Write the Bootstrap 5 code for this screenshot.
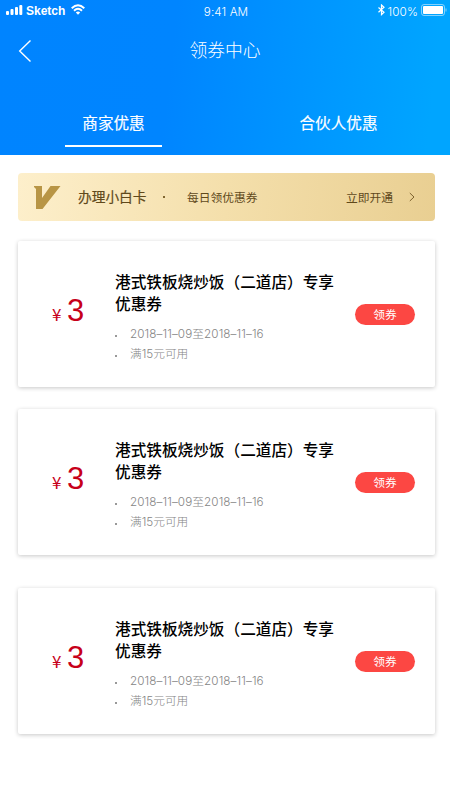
<!DOCTYPE html>
<html lang="zh-CN">
<head>
<meta charset="utf-8">
<meta name="viewport" content="width=device-width, initial-scale=1">
<title>领券中心</title>
<link href="https://cdn.jsdelivr.net/npm/bootstrap@5.3.0/dist/css/bootstrap.min.css" rel="stylesheet">
<style>
body{font-family:Inter,"Noto Sans CJK SC",sans-serif;height:800px;overflow:hidden;background:#fff}
svg{display:block;flex:none}
.hero{height:155px;background:linear-gradient(96deg,#0084ff 0%,#0085ff 38%,#00a5ff 95%)}
.status{height:24px;padding:0 5px 0 6px;font-size:12px;line-height:24px}
.status-side{width:150px}
.carrier{font:bold 12px/22px "Liberation Sans",sans-serif;margin-left:3px}
.wifi{margin-left:6px}
.battery{margin-right:-2px}
.clock{font-size:11.7px;padding-left:1px;font-weight:300;letter-spacing:.1px}
.percent{font-size:11.7px;font-weight:300;margin:0 3px 0 3px;letter-spacing:.1px}
.titlebar{height:52px;padding:0 18px}
.titlebar h1{font-size:17.8px;line-height:52px;font-weight:300;padding-top:1px}
.titlebar-end{width:14px}
.tabs{height:79px}
.tabs a{font-size:15.6px;line-height:24px;font-weight:400;padding-top:36px;padding-left:2px;-webkit-text-stroke:.15px}
.tabs a::after{content:"";display:block;width:97px;height:2px;margin-top:9px}
.tabs a.active::after{background:#fff}
.promo{margin:18px 15px 20px 18px;height:48px;border-radius:4px;padding:0 20px 0 15px;color:#60491b;background:linear-gradient(95deg,#fdefcb,#f4dfab 50%,#e9cf92)}
.promo-name{font-size:13.7px;font-weight:400;margin-left:16px;width:84px;padding-top:1px;-webkit-text-stroke:.2px}
.promo-dot{width:2px;height:2px;margin-left:1px;background:#80662f}
.promo-text{font-size:11.75px;padding-top:3px}
.promo-text.daily{margin-left:22px}
.coupon{margin:0 15px 22px 18px;height:146px;border-radius:2px;background:#fff;box-shadow:0 1px 4px rgba(0,0,0,.22)}
.coupon.later{margin-top:33px}
.price{width:97px;padding-left:34px;color:#c7001a;height:40px;margin-top:49px}
.price small{font:17px/47px "Noto Sans CJK SC",sans-serif;width:15px}
.price b{font:31px/42px "Liberation Sans",sans-serif}
.info{width:240px;padding-top:31px}
.info h2{font-size:15.65px;line-height:22px;font-weight:500;color:#000;width:225px}
.info ul{margin-top:8px;font-size:11.7px;line-height:20px;color:#858585;font-weight:300}
.info li{padding-left:15px;white-space:nowrap;background:linear-gradient(#999,#999) 0 11px/2px 2px no-repeat}
.info li:first-child{letter-spacing:.1px}
.claim{width:60px;height:21px;margin-top:63px;border-radius:11px;background:#fc4743!important;font-size:11.7px;line-height:22px;font-weight:400}
</style>
</head>
<body>
<header class="hero text-white">
  <div class="status d-flex justify-content-between">
    <div class="status-side d-flex">
      <svg class="mt-1" width="17" height="12" fill="#fff"><rect y="7" width="3" height="4" rx="1"/><rect x="4.5" y="5" width="3" height="6" rx="1"/><rect x="9" y="3" width="3" height="8" rx="1"/><rect x="13.3" y="1" width="3" height="10" rx="1"/></svg>
      <span class="carrier">Sketch</span>
      <svg class="wifi mt-1" width="14" height="12" fill="none" stroke="#fff" stroke-width="1.9"><path d="M.7 4.2Q7-1.7 13.3 4.2M3 6.7Q7 3 11 6.7"/><path d="M4.8 8.5Q7 6.5 9.2 8.5L7 10.8Z" fill="#fff" stroke="none"/></svg>
    </div>
    <span class="clock">9:41 AM</span>
    <div class="status-side d-flex justify-content-end">
      <svg class="mt-1" width="7" height="12" fill="none" stroke="#fff" stroke-width="1.2"><path d="M.5 3.5 6 8.2 3.5 10.6V1L6 3.3.5 8.3"/></svg>
      <span class="percent">100%</span>
      <svg class="battery mt-1" width="26" height="13" fill="none"><rect x=".5" y=".5" width="23" height="11" rx="2.5" stroke="#fff" stroke-opacity=".5"/><rect x="2" y="2" width="20" height="8" rx="1" fill="#fff"/><path d="M25 4.5v3" stroke="#fff" stroke-opacity=".5"/></svg>
    </div>
  </div>
  <div class="titlebar d-flex justify-content-between align-items-center">
    <svg width="14" height="24" fill="none" stroke="#fff" stroke-width="1.4"><path d="M12.5 2.5 1.7 13 12.5 23.5"/></svg>
    <h1 class="mb-0">领券中心</h1>
    <span class="titlebar-end"></span>
  </div>
  <nav class="tabs row g-0">
    <a class="col-6 active d-flex flex-column align-items-center text-white text-decoration-none" href="#">商家优惠</a>
    <a class="col-6 d-flex flex-column align-items-center text-white text-decoration-none" href="#">合伙人优惠</a>
  </nav>
</header>
<main>
  <section class="promo d-flex align-items-center">
    <svg width="29" height="24" fill="#b89545"><path d="M1 1H9V13L17.5 1H27.5L9.5 24H3V4L1 2Z"/></svg>
    <span class="promo-name">办理小白卡</span>
    <i class="promo-dot"></i>
    <span class="promo-text daily">每日领优惠券</span>
    <span class="promo-text ms-auto">立即开通</span>
    <svg class="ms-3" width="6" height="10" fill="none" stroke="#7c622f"><path d="M.8 1 5 5 .8 9"/></svg>
  </section>
  <article class="coupon d-flex align-items-start">
    <div class="price d-flex"><small>¥</small><b>3</b></div>
    <div class="info"><h2 class="m-0">港式铁板烧炒饭（二道店）专享优惠券</h2>
      <ul class="list-unstyled mb-0"><li>2018–11–09至2018–11–16</li><li>满15元可用</li></ul></div>
    <button class="claim btn text-white border-0 p-0">领券</button>
  </article>
  <article class="coupon d-flex align-items-start">
    <div class="price d-flex"><small>¥</small><b>3</b></div>
    <div class="info"><h2 class="m-0">港式铁板烧炒饭（二道店）专享优惠券</h2>
      <ul class="list-unstyled mb-0"><li>2018–11–09至2018–11–16</li><li>满15元可用</li></ul></div>
    <button class="claim btn text-white border-0 p-0">领券</button>
  </article>
  <article class="coupon later d-flex align-items-start">
    <div class="price d-flex"><small>¥</small><b>3</b></div>
    <div class="info"><h2 class="m-0">港式铁板烧炒饭（二道店）专享优惠券</h2>
      <ul class="list-unstyled mb-0"><li>2018–11–09至2018–11–16</li><li>满15元可用</li></ul></div>
    <button class="claim btn text-white border-0 p-0">领券</button>
  </article>
</main>
<script src="https://cdn.jsdelivr.net/npm/bootstrap@5.3.0/dist/js/bootstrap.bundle.min.js"></script>
</body>
</html>
